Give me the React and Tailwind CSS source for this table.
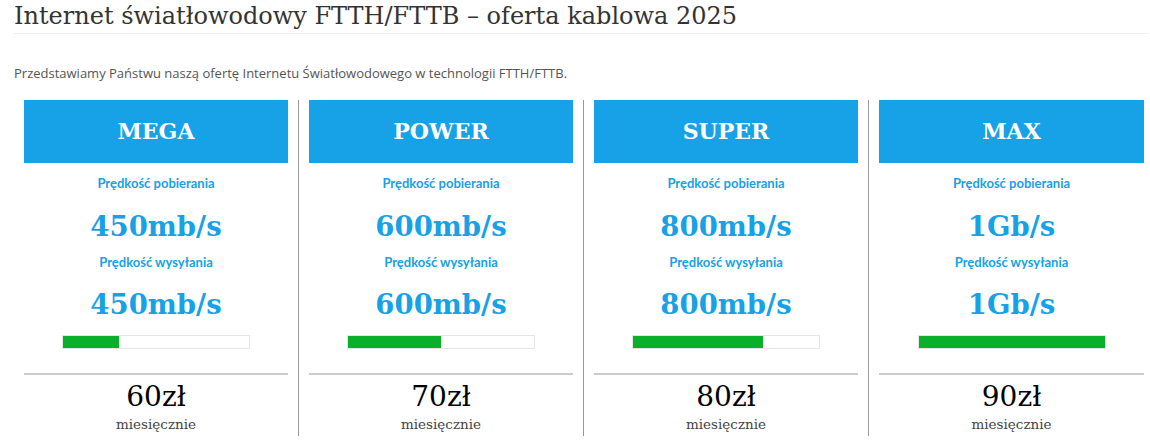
import React from "react";

const plans = [
  { name: "MEGA", down: "450mb/s", up: "450mb/s", fill: 30, price: "60zł" },
  { name: "POWER", down: "600mb/s", up: "600mb/s", fill: 50, price: "70zł" },
  { name: "SUPER", down: "800mb/s", up: "800mb/s", fill: 70, price: "80zł" },
  { name: "MAX", down: "1Gb/s", up: "1Gb/s", fill: 100, price: "90zł" },
];

const serif = { fontFamily: '"DejaVu Serif", "Liberation Serif", serif' };

const PlanColumn = ({ plan, last }) => (
  <div className={`w-[285px] h-[336px] shrink-0 px-[10px] ${last ? "" : "border-r border-[#9a9a9a]"}`}>
    <div className="h-[63px] bg-[#17a1e6] flex items-center justify-center">
      <h3 className="text-white text-[22px] font-bold font-['DejaVu_Serif','Liberation_Serif',serif]">
        {plan.name}
      </h3>
    </div>
    <div className="flex flex-col items-center text-[#17a1e6]">
      <p className="mt-[12px] text-[13px] font-bold font-['Lato',sans-serif] leading-[16px]">
        Prędkość pobierania
      </p>
      <p className="mt-[17px] text-[27.5px] font-bold leading-[36px] font-['DejaVu_Serif','Liberation_Serif',serif]">
        {plan.down}
      </p>
      <p className="mt-[10px] text-[13px] font-bold font-['Lato',sans-serif] leading-[16px]">
        Prędkość wysyłania
      </p>
      <p className="mt-[16px] text-[27.5px] font-bold leading-[36px] font-['DejaVu_Serif','Liberation_Serif',serif]">
        {plan.up}
      </p>
      <div className="mt-[13px] w-[188px] h-[14px] border border-[#e6e6e6] bg-white">
        <div className="h-full bg-[#0aaf2a]" style={{ width: `${plan.fill}%` }} />
      </div>
    </div>
    <div className="mt-[24px] border-t-2 border-[#cccccc] flex flex-col items-center">
      <p className="mt-[5px] text-[28px] leading-[34px] text-black font-['DejaVu_Serif','Liberation_Serif',serif]">
        {plan.price}
      </p>
      <p className="mt-[1px] text-[13.5px] leading-[18px] text-[#444] font-['DejaVu_Serif','Liberation_Serif',serif]">
        miesięcznie
      </p>
    </div>
  </div>
);

export default function App() {
  return (
    <div className="w-[1150px] h-[441px] overflow-hidden bg-white">
      <div className="pl-[14px] pr-[2px]">
        <h1 className="text-[24px] leading-[32px] text-[#333] pb-[1px] border-b border-[#eeeeee]" style={serif}>
          Internet światłowodowy FTTH/FTTB – oferta kablowa 2025
        </h1>
        <p className="mt-[30px] text-[13px] text-[#555] font-['Open_Sans',sans-serif] leading-[18px]">
          Przedstawiamy Państwu naszą ofertę Internetu Światłowodowego w technologii FTTH/FTTB.
        </p>
        <div className="mt-[18px] flex">
          {plans.map((p, i) => (
            <PlanColumn key={p.name} plan={p} last={i === plans.length - 1} />
          ))}
        </div>
      </div>
    </div>
  );
}
